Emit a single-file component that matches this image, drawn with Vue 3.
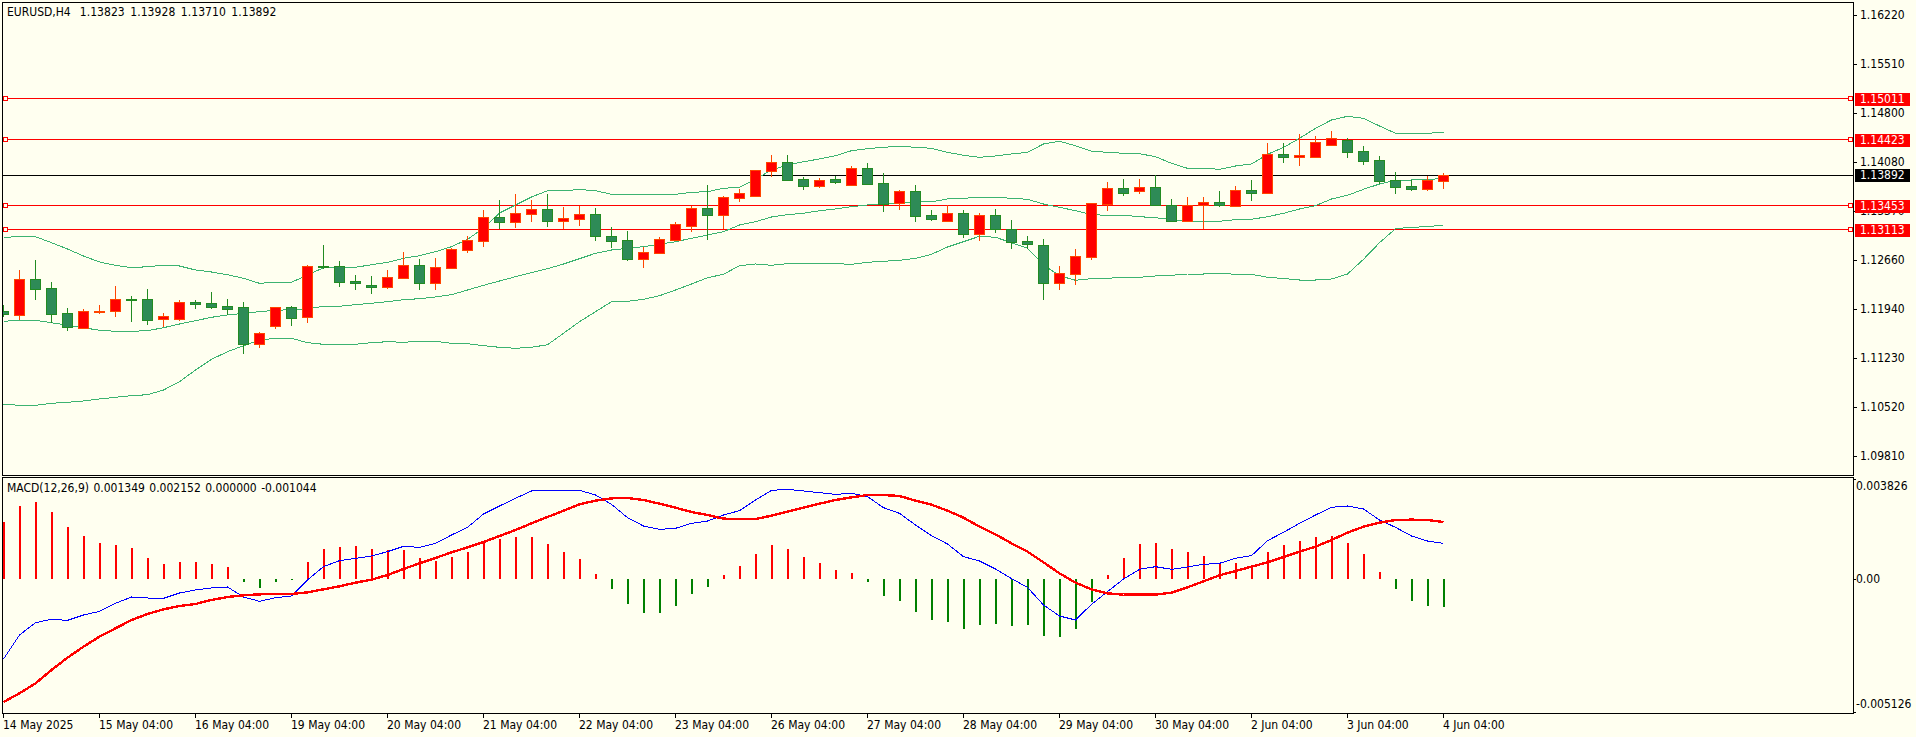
<template>
  <div class="terminal">
    <!-- price pane -->
    <div class="pane pane-main">
      <div class="plot">
        <svg class="plot-svg" width="1850" height="472" viewBox="3 3 1850 472" shape-rendering="crispEdges">
          <line v-for="y in levels" :key="y" x1="3" x2="1853" :y1="y + 0.5" :y2="y + 0.5" stroke="#ff0000" />
          <line x1="3" x2="1853" y1="175.5" y2="175.5" stroke="#000000" />
          <g fill="none" stroke="#3cb371">
            <polyline :points="toPoints(bandUpper)" />
            <polyline :points="toPoints(bandMiddle)" />
            <polyline :points="toPoints(bandLower)" />
          </g>
          <g v-for="c in candleShapes" :key="c.x">
            <line :x1="c.x + 0.5" :x2="c.x + 0.5" :y1="c.high" :y2="c.low" :stroke="c.line" />
            <rect :x="c.x - 5 + 0.5" :y="c.top + 0.5" width="10" :height="c.bottom - c.top" :fill="c.fill" :stroke="c.line" />
          </g>
          <g fill="#fffff0" stroke="#ff0000">
            <template v-for="y in levels" :key="y">
              <rect x="3.5" :y="y - 2 + 0.5" width="4" height="4" />
              <rect x="1848.5" :y="y - 2 + 0.5" width="4" height="4" />
            </template>
          </g>
        </svg>
        <div class="legend legend-main">
          <span>{{ symbolLabel }}</span>
          <span class="legend-values">{{ ohlcLabel }}</span>
        </div>
      </div>
      <div class="axis">
        <div v-for="t in priceTicks" :key="t.text" class="tick" :style="{ top: t.y - 8 + 'px' }">
          <span class="tick-mark"></span>
          <span class="tick-text">{{ t.text }}</span>
        </div>
        <div
          v-for="p in priceTags"
          :key="p.text"
          class="price-tag"
          :class="{ current: p.current }"
          :style="{ top: p.y - 8 + 'px' }"
        >{{ p.text }}</div>
      </div>
    </div>

    <!-- MACD pane -->
    <div class="pane pane-macd">
      <div class="plot">
        <svg class="plot-svg" width="1850" height="235" viewBox="3 478 1850 235" shape-rendering="crispEdges">
          <rect
            v-for="b in histBars"
            :key="b.x"
            :x="b.x"
            :y="b.y"
            width="2"
            :height="b.h"
            :fill="b.up ? '#ff0000' : '#008000'"
          />
          <polyline :points="toPoints(macdMain)" fill="none" stroke="#0000ff" />
          <polyline :points="toPoints(macdSignal)" fill="none" stroke="#ff0000" stroke-width="2.4" />
        </svg>
        <div class="legend legend-macd">MACD(12,26,9) 0.001349 0.002152 0.000000 -0.001044</div>
      </div>
      <div class="axis axis-macd">
        <span class="edge-tick edge-top"></span>
        <div class="macd-label label-top">0.003826</div>
        <div class="tick tick-zero">
          <span class="tick-mark"></span>
          <span class="tick-text">0.00</span>
        </div>
        <span class="edge-tick edge-bottom"></span>
        <div class="macd-label label-bottom">-0.005126</div>
      </div>
    </div>

    <!-- time axis -->
    <div class="time-axis">
      <div v-for="d in dates" :key="d" class="time-cell">{{ d }}</div>
    </div>
  </div>
</template>

<script setup>
const symbolLabel = 'EURUSD,H4'
const ohlcLabel = '1.13823 1.13928 1.13710 1.13892'

const levels = [98, 139, 205, 229]

const priceTicks = [
  { y: 15, text: '1.16220' },
  { y: 64, text: '1.15510' },
  { y: 113, text: '1.14800' },
  { y: 162, text: '1.14080' },
  { y: 211, text: '1.13370' },
  { y: 260, text: '1.12660' },
  { y: 309, text: '1.11940' },
  { y: 358, text: '1.11230' },
  { y: 407, text: '1.10520' },
  { y: 456, text: '1.09810' }
]

const priceTags = [
  { y: 99, text: '1.15011' },
  { y: 140, text: '1.14423' },
  { y: 175, text: '1.13892', current: true },
  { y: 206, text: '1.13453' },
  { y: 230, text: '1.13113' }
]

const dates = [
  '14 May 2025', '15 May 04:00', '16 May 04:00', '19 May 04:00', '20 May 04:00', '21 May 04:00',
  '22 May 04:00', '23 May 04:00', '26 May 04:00', '27 May 04:00', '28 May 04:00', '29 May 04:00',
  '30 May 04:00', '2 Jun 04:00', '3 Jun 04:00', '4 Jun 04:00'
]

// each bar is 16px wide, first one sits on x = 3
const barX = i => 3 + 16 * i

// high, body top, body bottom, low, 1 = bull (red)
const candles = [
  [305, 311, 314, 317, 0], [270, 279, 315, 320, 1], [260, 279, 289, 300, 0], [282, 288, 314, 323, 0],
  [308, 313, 327, 331, 0], [309, 311, 328, 329, 1], [305, 311, 312, 314, 1], [286, 299, 311, 317, 1],
  [296, 299, 300, 322, 0], [289, 299, 320, 325, 0], [313, 316, 319, 327, 1], [300, 302, 319, 321, 1],
  [300, 302, 304, 309, 0], [292, 303, 307, 309, 0], [299, 306, 309, 315, 0], [302, 307, 344, 354, 0],
  [332, 333, 344, 348, 1], [307, 307, 326, 329, 1], [306, 307, 318, 326, 0], [265, 266, 317, 323, 1],
  [245, 266, 267, 269, 0], [261, 266, 282, 287, 0], [275, 281, 283, 290, 0], [276, 285, 287, 294, 0],
  [270, 277, 287, 289, 1], [252, 265, 278, 278, 1], [259, 265, 283, 290, 0], [258, 267, 283, 290, 1],
  [248, 249, 268, 269, 1], [236, 240, 250, 253, 1], [210, 217, 241, 247, 1], [200, 217, 222, 229, 0],
  [194, 213, 222, 228, 1], [200, 209, 214, 222, 1], [194, 209, 221, 227, 0], [207, 218, 221, 229, 1],
  [206, 214, 219, 226, 1], [208, 214, 236, 241, 0], [227, 236, 241, 248, 0], [231, 240, 259, 261, 0],
  [247, 252, 259, 268, 1], [237, 239, 253, 254, 1], [222, 224, 240, 241, 1], [206, 208, 226, 232, 1],
  [185, 208, 215, 240, 0], [196, 197, 215, 229, 1], [189, 193, 198, 202, 1], [170, 170, 196, 197, 1],
  [155, 162, 171, 177, 1], [155, 162, 180, 181, 0], [177, 179, 186, 190, 0], [178, 180, 186, 188, 1],
  [176, 179, 182, 184, 0], [166, 168, 185, 185, 1], [163, 168, 184, 184, 0], [173, 183, 204, 212, 0],
  [190, 191, 203, 210, 1], [185, 191, 216, 222, 0], [210, 215, 219, 221, 0], [205, 213, 221, 221, 1],
  [210, 213, 234, 238, 0], [213, 215, 234, 241, 1], [209, 215, 229, 233, 0], [220, 229, 242, 249, 0],
  [236, 241, 244, 249, 0], [239, 245, 283, 300, 0], [266, 273, 283, 290, 1], [249, 256, 274, 285, 1],
  [203, 203, 257, 260, 1], [182, 188, 204, 211, 1], [179, 188, 193, 196, 0], [179, 187, 191, 194, 1],
  [175, 187, 205, 205, 0], [199, 205, 221, 222, 0], [197, 205, 221, 221, 1], [197, 202, 205, 229, 1],
  [191, 202, 205, 207, 0], [186, 190, 206, 207, 1], [180, 190, 193, 201, 0], [143, 154, 193, 194, 1],
  [143, 154, 157, 163, 0], [134, 155, 157, 166, 1], [136, 142, 157, 158, 1], [131, 138, 145, 145, 1],
  [138, 140, 152, 158, 0], [146, 151, 161, 165, 0], [156, 160, 181, 184, 0], [172, 180, 187, 194, 0],
  [180, 186, 189, 191, 0], [176, 180, 189, 191, 1], [173, 175, 181, 189, 1]
]

const candleShapes = candles.map(([high, top, bottom, low, up], i) => ({
  x: barX(i),
  high,
  top,
  bottom,
  low,
  fill: up ? '#ff0000' : '#2e8b57',
  line: up ? '#ff4500' : '#228b22'
}))

const bandUpper = [
  237.3, 236.7, 236.7, 242.7, 249, 256, 262, 265.3, 267.7, 266.7, 265.3, 266, 270, 272, 274.7, 278.3,
  283.3, 282.3, 282.3, 275, 267.7, 268, 267.3, 264.7, 262.3, 258.3, 255.7, 251.7, 246.7, 239.3, 228.3, 213,
  205, 197, 190.7, 190.7, 189.5, 190.7, 194.3, 194.3, 194.3, 194.3, 194.3, 192.3, 191.7, 188.3, 187.3, 179.3,
  170, 165, 161.7, 159, 155.7, 150.7, 148.7, 147.3, 146.3, 147.3, 148.3, 152.3, 155.3, 157.3, 156, 154,
  152.3, 144, 141.3, 145.7, 151.3, 152.3, 153.3, 153.7, 156.7, 163.3, 168.3, 168.3, 169.3, 166, 164, 154.3,
  147.5, 138.3, 128.3, 120, 116.3, 118.3, 126, 133.3, 133.3, 133.3, 132.3
]

const bandMiddle = [
  321.3, 320.3, 320.3, 322.7, 325.3, 327.7, 330.3, 331.3, 331.3, 330.7, 327.7, 324, 320.7, 317.3, 315, 313.3,
  311.7, 310.3, 309.7, 308.7, 306.3, 306.3, 304.7, 303.3, 301.7, 299.7, 298.7, 297, 294.7, 290, 285.3, 281,
  276.7, 272.7, 268.7, 264, 258.7, 253.3, 250, 248.3, 246.7, 244.3, 241.7, 238.3, 235, 231.7, 225, 221.7,
  217, 214.7, 213.3, 210.7, 209, 206.7, 205, 204, 203.3, 202, 201.7, 199, 198.3, 197.3, 197.3, 198.3,
  199.3, 204, 207.3, 210.7, 214.7, 215.3, 215.3, 216.7, 217.7, 219.7, 221.3, 221.3, 221.3, 219.7, 219.3, 216.7,
  213.3, 209, 205.7, 199, 195.3, 189.3, 184, 180.3, 180, 179.3, 178.7
]

const bandLower = [
  404.3, 405.3, 405.3, 403.3, 402.3, 401, 399, 397.3, 395.7, 394.7, 390, 381.7, 370, 359.3, 351.7, 345.7,
  340, 338.3, 338.3, 342.7, 344.3, 344.3, 344.3, 342.7, 341.7, 342.3, 341.3, 341.3, 343.3, 343.7, 345.7, 347.3,
  348.3, 347.3, 344.7, 333.3, 321.7, 311.7, 301.7, 301.3, 299.3, 295.7, 290, 284, 277.7, 274.3, 265.7, 264,
  265.3, 263.7, 263.3, 263.3, 263.7, 264.3, 262.3, 261.3, 260.3, 258.3, 254.3, 247, 241.7, 236.3, 237.3, 242.7,
  248.3, 265, 275.7, 280.3, 278.7, 278.3, 277.3, 277.3, 276, 275.3, 274, 274, 273.3, 274.3, 274.3, 277.3,
  278.5, 280, 280, 279, 274, 259.3, 242.7, 228.7, 227.3, 226.7, 225
]

// read off the chart at 3x, so y = 470 + v / 3
const macdY = v => 470 + v / 3
const ZERO_ROW = 327

const histValues = [
  155, 107, 96, 126, 171, 198, 219, 225, 234, 264, 282, 276, 276, 282, 291, 335,
  354, 335, 331, 276, 237, 231, 228, 237, 240, 240, 264, 273, 261, 246, 216, 207,
  201, 201, 222, 246, 267, 312, 356, 401, 429, 429, 408, 372, 351, 315, 288, 252,
  225, 237, 261, 279, 300, 309, 336, 378, 393, 426, 450, 456, 477, 465, 462, 468,
  465, 498, 501, 477, 396, 315, 264, 222, 219, 237, 246, 258, 279, 279, 285, 246,
  225, 213, 201, 198, 219, 252, 306, 357, 393, 408, 411
]

const histBars = histValues.map((v, i) => {
  const up = v < ZERO_ROW
  const y = Math.round(macdY(Math.min(v, ZERO_ROW)))
  const h = Math.round(Math.abs(v - ZERO_ROW) / 3)
  return { x: barX(i), y, h, up }
})

const macdMain = [
  567, 495, 458, 448, 451, 435, 424, 400, 381, 384, 385, 369, 360, 354, 351, 381,
  394, 383, 378, 330, 290, 272, 265, 258, 245, 229, 232, 220, 195, 172, 132, 108,
  85, 63, 61, 61, 61, 75, 103, 143, 168, 178, 175, 160, 153, 135, 122, 90,
  61, 58, 63, 68, 73, 70, 80, 113, 130, 165, 197, 222, 260, 273, 297, 326,
  352, 405, 438, 450, 403, 365, 327, 298, 290, 298, 291, 283, 280, 265, 257, 212,
  187, 160, 135, 112, 108, 117, 150, 172, 198, 213, 220
].map(macdY)

const macdSignal = [
  696, 670, 640, 600, 563, 530, 500, 475, 450, 432, 418, 408, 402, 390, 381, 376,
  373, 372, 372, 367, 358, 349, 338, 329, 315, 297, 280, 264, 247, 232, 216, 198,
  180, 160, 141, 122, 103, 92, 85, 84, 90, 101, 113, 126, 135, 146, 147, 147,
  137, 125, 113, 101, 90, 82, 75, 75, 78, 92, 104, 122, 143, 170, 193, 220,
  245, 277, 310, 338, 358, 370, 374, 374, 374, 368, 352, 334, 316, 303, 290, 277,
  261, 245, 230, 210, 188, 170, 158, 150, 149, 150, 156
].map(macdY)

function toPoints(values) {
  return values.map((y, i) => `${barX(i) + 0.5},${y}`).join(' ')
}
</script>

<style scoped>
.terminal {
  width: 1916px;
  height: 737px;
  box-sizing: border-box;
  padding: 2px 0 0 2px;
  background: #fffff0;
  color: #000;
  font-family: "DejaVu Sans", "Liberation Sans", sans-serif;
  font-stretch: condensed;
  font-size: 12px;
  line-height: 13px;
  overflow: hidden;
  display: flex;
  flex-direction: column;
}

.pane {
  display: flex;
}

.pane-main {
  height: 474px;
  margin-bottom: 1px;
}

.pane-macd {
  height: 237px;
}

.plot {
  position: relative;
  width: 1852px;
  box-sizing: border-box;
  border: 1px solid #000;
  overflow: hidden;
}

.plot-svg {
  display: block;
}

.legend {
  position: absolute;
  left: 4px;
  white-space: nowrap;
}

.legend-main {
  top: 3px;
  display: flex;
  gap: 9px;
}

.legend-values {
  word-spacing: 2px;
  letter-spacing: 0.06px;
}

.legend-macd {
  top: 4px;
  word-spacing: 1px;
}

.axis {
  position: relative;
  flex: 1;
}

.tick {
  position: absolute;
  left: 0;
  display: flex;
  align-items: center;
  height: 13px;
  white-space: nowrap;
}

.tick-mark {
  width: 3px;
  height: 1px;
  margin-right: 3px;
  background: #000;
}

.tick-zero {
  top: 96px;
}

.tick-zero .tick-mark {
  width: 2px;
  margin-right: 0;
}

.price-tag {
  position: absolute;
  left: 1px;
  width: 55px;
  height: 13px;
  box-sizing: border-box;
  padding-left: 5px;
  background: #ff0000;
  color: #fff;
}

.price-tag.current {
  background: #000;
}

.macd-label {
  position: absolute;
  left: 2px;
  white-space: nowrap;
}

.label-top {
  top: 3px;
}

.label-bottom {
  top: 221px;
}

.edge-tick {
  position: absolute;
  left: 0;
  width: 2px;
  height: 1px;
  background: #000;
}

.edge-top {
  top: 2px;
}

.edge-bottom {
  top: 235px;
}

.time-axis {
  display: flex;
  padding-left: 1px;
}

.time-cell {
  position: relative;
  flex: 0 0 96px;
  padding-top: 5px;
  white-space: nowrap;
}

.time-cell::before {
  content: "";
  position: absolute;
  left: 0;
  top: 0;
  width: 1px;
  height: 4px;
  background: #000;
}
</style>

<style>
body {
  background: #fffff0;
}
</style>
